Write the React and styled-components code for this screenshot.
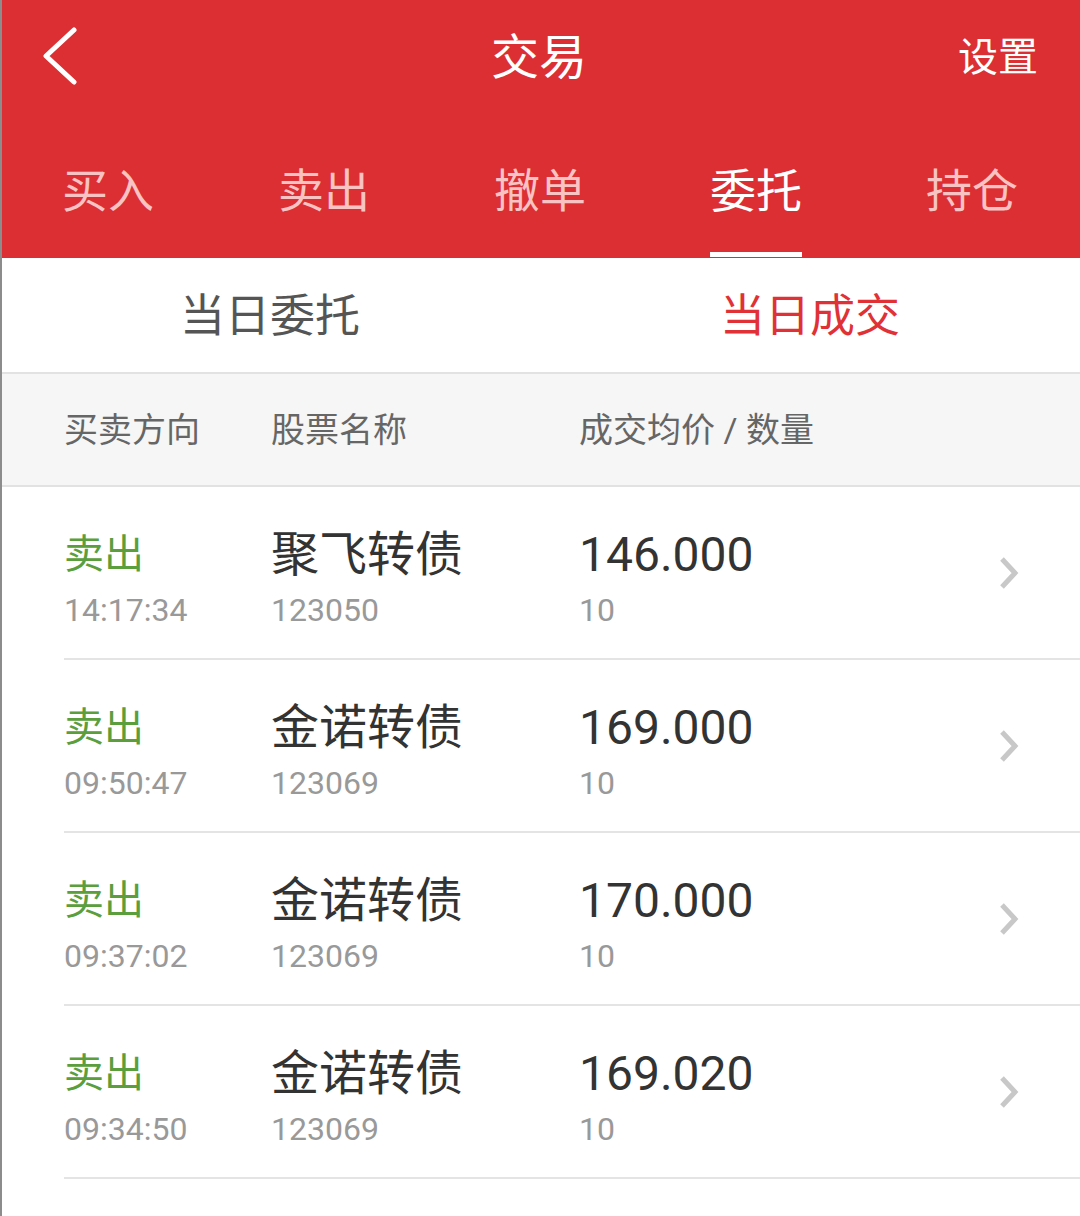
import React from "react";
import styled, { createGlobalStyle } from "styled-components";

const GlobalStyle = createGlobalStyle`
  html, body {
    margin: 0;
    padding: 0;
    background: #fff;
  }
  body {
    font-family: Roboto, "Noto Sans CJK SC", "Noto Sans", sans-serif;
  }
`;

const trades = [
  { time: "14:17:34", name: "聚飞转债", code: "123050", price: "146.000", qty: "10" },
  { time: "09:50:47", name: "金诺转债", code: "123069", price: "169.000", qty: "10" },
  { time: "09:37:02", name: "金诺转债", code: "123069", price: "170.000", qty: "10" },
  { time: "09:34:50", name: "金诺转债", code: "123069", price: "169.020", qty: "10" },
];

const tabs = ["买入", "卖出", "撤单", "委托", "持仓"];

const App = () => {
  return (
    <Page>
      <GlobalStyle />
      <Header>
        <TopBar>
          <BackButton>
            <svg width="38" height="58" viewBox="0 0 38 58">
              <polyline
                points="34,3 6,29 34,55"
                fill="none"
                stroke="#fff"
                strokeWidth="5"
                strokeLinecap="round"
                strokeLinejoin="round"
              />
            </svg>
          </BackButton>
          <Title>交易</Title>
          <Settings>设置</Settings>
        </TopBar>
        <TabRow>
          {tabs.map((t) => (
            <Tab key={t}>
              <TabLabel $active={t === "委托"}>{t}</TabLabel>
            </Tab>
          ))}
        </TabRow>
      </Header>

      <Segment>
        <SegmentItem>当日委托</SegmentItem>
        <SegmentItem $active>当日成交</SegmentItem>
      </Segment>

      <ColumnHeader>
        <span>买卖方向</span>
        <span>股票名称</span>
        <span>成交均价 / 数量</span>
      </ColumnHeader>

      <List>
        {trades.map((r, i) => (
          <Row key={i}>
            <Cell>
              <Side>卖出</Side>
              <Sub>{r.time}</Sub>
            </Cell>
            <Cell>
              <Name>{r.name}</Name>
              <Sub>{r.code}</Sub>
            </Cell>
            <Cell>
              <Price>{r.price}</Price>
              <Sub>{r.qty}</Sub>
            </Cell>
            <Arrow>
              <svg width="22" height="36" viewBox="0 0 22 36">
                <polyline
                  points="4,4 17,18 4,32"
                  fill="none"
                  stroke="#c8c8c8"
                  strokeWidth="5"
                />
              </svg>
            </Arrow>
          </Row>
        ))}
      </List>
    </Page>
  );
};

export default App;

const Page = styled.div`
  width: 1080px;
  min-height: 1216px;
  background: #fff;
  border-left: 2px solid rgba(0, 0, 0, 0.45);
  box-sizing: border-box;
  overflow: hidden;
`;

const Header = styled.div`
  background: #dc2f33;
  display: flex;
  flex-direction: column;
`;

const TopBar = styled.div`
  height: 116px;
  display: flex;
  align-items: center;
  justify-content: space-between;
  padding: 0 42px 0 38px;
`;

const BackButton = styled.div`
  width: 160px;
  display: flex;
  align-items: center;
  margin-top: -4px;
`;

const Title = styled.div`
  color: #fff;
  font-size: 48px;
  line-height: 1;
`;

const Settings = styled.div`
  width: 160px;
  text-align: right;
  color: #fff;
  font-size: 40px;
  line-height: 1;
`;

const TabRow = styled.div`
  height: 142px;
  display: flex;
  align-items: flex-end;
  margin-left: -2px;
`;

const Tab = styled.div`
  flex: 1;
  display: flex;
  justify-content: center;
`;

const TabLabel = styled.div`
  font-size: 46px;
  line-height: 46px;
  padding-bottom: 38px;
  margin-bottom: 1px;
  color: ${(p) => (p.$active ? "#fff" : "#f9c3c3")};
  border-bottom: 5px solid ${(p) => (p.$active ? "#fff" : "transparent")};
`;

const Segment = styled.div`
  height: 114px;
  display: flex;
  border-bottom: 2px solid #e2e2e2;
  margin-left: -2px;
`;

const SegmentItem = styled.div`
  flex: 1;
  display: flex;
  align-items: center;
  justify-content: center;
  padding-bottom: 6px;
  font-size: 45px;
  color: ${(p) => (p.$active ? "#e03236" : "#555")};
`;

const ColumnHeader = styled.div`
  height: 111px;
  background: #f6f6f6;
  border-bottom: 2px solid #e2e2e2;
  display: grid;
  grid-template-columns: 207px 308px 1fr;
  align-items: center;
  padding-left: 62px;
  padding-bottom: 5px;
  box-sizing: border-box;
  height: 113px;
  font-size: 34px;
  color: #666;
`;

const List = styled.div`
  padding-left: 62px;
`;

const Row = styled.div`
  height: 171px;
  box-sizing: content-box;
  border-bottom: 2px solid #e4e4e4;
  display: grid;
  grid-template-columns: 207px 308px 1fr 80px;
  align-items: start;
`;

const Cell = styled.div`
  display: flex;
  flex-direction: column;
  padding-top: 40px;
  gap: 7px;
`;

const Side = styled.div`
  font-size: 40px;
  line-height: 56px;
  color: #5a9e3d;
`;

const Name = styled.div`
  font-size: 48px;
  line-height: 56px;
  color: #333;
`;

const Price = styled.div`
  font-size: 48px;
  line-height: 56px;
  color: #333;
`;

const Sub = styled.div`
  font-size: 32px;
  line-height: 40px;
  color: #999;
`;

const Arrow = styled.div`
  align-self: center;
  display: flex;
  justify-content: flex-start;
  margin-left: -2px;
`;
